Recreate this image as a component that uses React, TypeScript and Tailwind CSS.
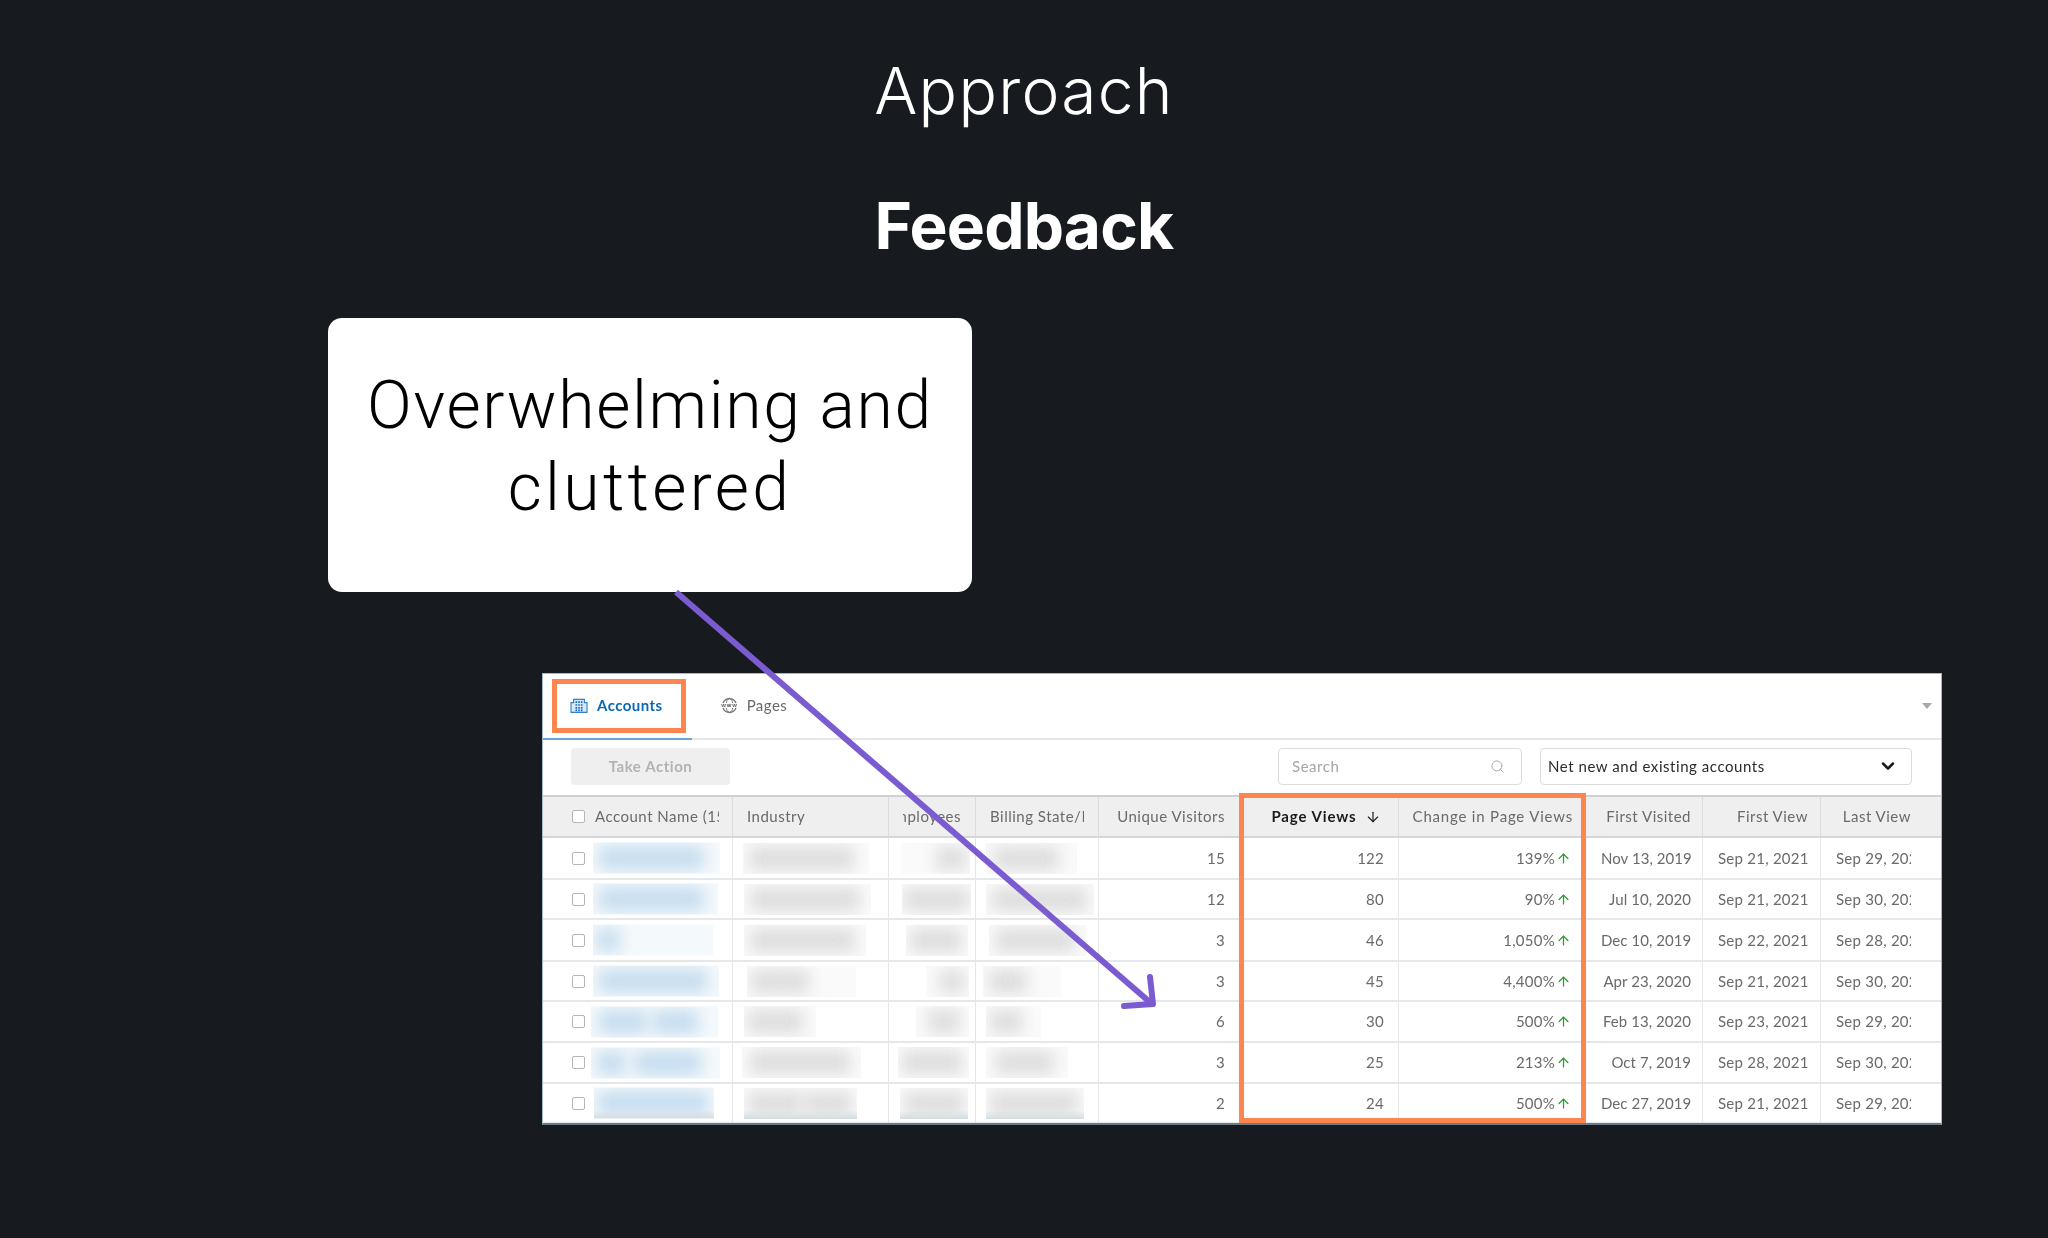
import React from 'react';
import { ArrowDown, ArrowUp, ChevronDown, Search } from 'lucide-react';

type BlurCell = { start: number; width: number; blobs: [number, number][] };

type Row = {
  height: string;
  cells: BlurCell[];
  visitors: number;
  views: number;
  change: string;
  firstVisited: string;
  firstView: string;
  lastView: string;
};

const cell = (start: number, width: number, ...blobs: [number, number][]): BlurCell => ({ start, width, blobs });

const rows: Row[] = [
  {
    height: 'h-[42px]',
    cells: [
      cell(50, 127, [6, 105]),
      cell(10, 126, [6, 105]),
      cell(12, 69, [35, 30]),
      cell(10, 91, [8, 65]),
    ],
    visitors: 15, views: 122, change: '139%', firstVisited: 'Nov 13, 2019', firstView: 'Sep 21, 2021', lastView: 'Sep 29, 2021',
  },
  {
    height: 'h-[40px]',
    cells: [
      cell(50, 125, [6, 105]),
      cell(11, 127, [6, 110]),
      cell(13, 69, [2, 65]),
      cell(10, 108, [6, 95]),
    ],
    visitors: 12, views: 80, change: '90%', firstVisited: 'Jul 10, 2020', firstView: 'Sep 21, 2021', lastView: 'Sep 30, 2021',
  },
  {
    height: 'h-[42px]',
    cells: [
      cell(50, 120, [4, 22]),
      cell(11, 122, [6, 105]),
      cell(17, 62, [4, 52]),
      cell(13, 97, [6, 80]),
    ],
    visitors: 3, views: 46, change: '1,050%', firstVisited: 'Dec 10, 2019', firstView: 'Sep 22, 2021', lastView: 'Sep 28, 2021',
  },
  {
    height: 'h-[40px]',
    cells: [
      cell(50, 126, [6, 108]),
      cell(14, 109, [4, 58]),
      cell(37, 43, [14, 24]),
      cell(7, 78, [6, 38]),
    ],
    visitors: 3, views: 45, change: '4,400%', firstVisited: 'Apr 23, 2020', firstView: 'Sep 21, 2021', lastView: 'Sep 30, 2021',
  },
  {
    height: 'h-[41px]',
    cells: [
      cell(48, 127, [8, 48], [62, 45]),
      cell(11, 72, [4, 55]),
      cell(27, 53, [12, 32]),
      cell(10, 55, [4, 32]),
    ],
    visitors: 6, views: 30, change: '500%', firstVisited: 'Feb 13, 2020', firstView: 'Sep 23, 2021', lastView: 'Sep 29, 2021',
  },
  {
    height: 'h-[41px]',
    cells: [
      cell(48, 129, [6, 28], [44, 66]),
      cell(9, 119, [8, 100]),
      cell(9, 71, [4, 60]),
      cell(10, 82, [10, 58]),
    ],
    visitors: 3, views: 25, change: '213%', firstVisited: 'Oct 7, 2019', firstView: 'Sep 28, 2021', lastView: 'Sep 30, 2021',
  },
  {
    height: 'h-[40px]',
    cells: [
      cell(51, 120, [4, 110]),
      cell(11, 113, [4, 55], [60, 48]),
      cell(11, 68, [4, 60]),
      cell(10, 98, [4, 88]),
    ],
    visitors: 2, views: 24, change: '500%', firstVisited: 'Dec 27, 2019', firstView: 'Sep 21, 2021', lastView: 'Sep 29, 2021',
  },
];

const gridCols = 'grid grid-cols-[190px_156px_87px_123px_143px_157px_185px_119px_118px_118px]';

const AccountsIcon = () => (
  <svg width="18" height="15" viewBox="0 0 18 15" fill="none" stroke="#2f80c6" strokeWidth="1.1">
    <path d="M1 14.4V4.6h2.6V1.4h10.8v3.2H17v9.8z" fill="#d9e8f5" />
    <path d="M5.5 4.2h1.6M8.2 4.2h1.6M10.9 4.2h1.6M5.5 7h1.6M8.2 7h1.6M10.9 7h1.6M5.5 9.8h1.6M8.2 9.8h1.6M10.9 9.8h1.6M5.5 12.4h1.6M8.2 12.4h1.6M10.9 12.4h1.6" stroke="#0c67b5" strokeWidth="1.7" />
  </svg>
);

const PagesIcon = () => (
  <svg width="17" height="17" viewBox="0 0 17 17" fill="none" stroke="#707070" strokeWidth="1.3">
    <path d="M2 6a7 7 0 0 1 13 0M2 11a7 7 0 0 0 13 0" />
    <path d="M8.5 1.2c-2 1.2-3 2.8-3.2 4.8M8.5 1.2c2 1.2 3 2.8 3.2 4.8M8.5 15.8c-2-1.2-3-2.8-3.2-4.8M8.5 15.8c2-1.2 3-2.8 3.2-4.8" strokeWidth="1" />
    <path d="M.6 7l1 3 1-3 1 3 1-3M6.1 7l1 3 1-3 1 3 1-3M11.6 7l1 3 1-3 1 3 1-3" strokeWidth="0.9" />
  </svg>
);

const Check = () => <span className="block size-[13px] shrink-0 rounded-[2px] border border-[#b5b5b5] bg-white" />;

const HeadCell = ({ children, className = '' }: { children: React.ReactNode; className?: string }) => (
  <div className={`flex h-full items-center overflow-hidden whitespace-nowrap border-r border-[#dcdcdc] ${className}`}>
    {children}
  </div>
);

const Blurred = ({ data, blue, tail }: { data: BlurCell; blue?: boolean; tail?: boolean }) => (
  <div
    className={`relative h-[31px] overflow-hidden ${blue ? 'bg-[#f4f9fc]' : 'bg-[#fafafa]'}`}
    style={{ marginLeft: data.start, width: data.width }}
  >
    {data.blobs.map(([left, width]) => (
      <div
        key={left}
        className={`absolute inset-y-[4px] blur-[8px] ${blue ? 'bg-[#c4dcee]' : 'bg-[#dddddd]'}`}
        style={{ left, width }}
      />
    ))}
    {tail && <div className="absolute inset-x-0 bottom-0 h-[9px] bg-linear-to-b from-transparent to-[#d3dce1]" />}
  </div>
);

const BodyCell = ({ children, className = '' }: { children?: React.ReactNode; className?: string }) => (
  <div className={`flex h-full items-center overflow-hidden whitespace-nowrap border-r border-[#e6e6e6] ${className}`}>
    {children}
  </div>
);

const AccountsTable = () => (
  <div className="relative h-[452px] w-[1400px] overflow-hidden border border-[#a3bac8] border-b-2 border-b-[#6d7c85] bg-white font-['Lato','Open_Sans',sans-serif] text-[15px] text-[#6a6a6a] blur-[0.35px]">
    {/* tabs */}
    <div className="relative flex h-[66px] items-center border-b-2 border-[#e4e6e8] pb-[1px] tracking-[0.45px]">
      <div className="absolute -bottom-[2px] left-0 h-[2px] w-[149px] bg-[#6aa5d8]" />
      <div className="ml-[27px] flex items-center gap-[9px] font-bold text-[#0c67b5]">
        <AccountsIcon />
        Accounts
      </div>
      <div className="ml-[58px] flex items-center gap-[9px]">
        <PagesIcon />
        Pages
      </div>
      <div className="ml-auto mr-[9px] size-0 border-x-[5px] border-t-[6px] border-x-transparent border-t-[#a9a9a9]" />
    </div>

    {/* toolbar */}
    <div className="flex h-[57px] items-center border-b-2 border-[#cfd2d4] pb-[3px] tracking-[0.55px]">
      <div className="ml-[28px] flex h-[37px] w-[159px] items-center justify-center rounded-[4px] bg-[#efefef] font-bold text-[#b3b3b3]">
        Take Action
      </div>
      <div className="ml-[548px] flex h-[37px] w-[244px] items-center justify-between rounded-[4px] border border-[#dcdcdc] pl-[13px] pr-[16px] text-[#a5a5a5]">
        Search
        <Search size={15} strokeWidth={1.5} />
      </div>
      <div className="ml-[18px] flex h-[37px] w-[372px] items-center justify-between rounded-[4px] border border-[#dcdcdc] pl-[7px] pr-[13px] text-[#2b2b2b]">
        Net new and existing accounts
        <ChevronDown size={20} strokeWidth={3} className="text-[#1a1a1a]" />
      </div>
    </div>

    {/* table head */}
    <div className={`${gridCols} h-[41px] border-b-2 border-[#d4d7d9] bg-[#efefef] tracking-[0.5px]`}>
      <HeadCell className="gap-[10px] pl-[29px]">
        <Check />
        <span className="w-[124px] overflow-hidden">Account Name (15)</span>
      </HeadCell>
      <HeadCell className="pl-[14px]">Industry</HeadCell>
      <HeadCell className="pl-[14px]">
        <span className="flex w-[58px] justify-end overflow-hidden">Employees</span>
      </HeadCell>
      <HeadCell className="pl-[14px]">
        <span className="w-[94px] overflow-hidden">Billing State/Province</span>
      </HeadCell>
      <HeadCell className="justify-end pr-[16px]">Unique Visitors</HeadCell>
      <HeadCell className="justify-center gap-[8px] pl-[12px] font-bold tracking-[0.9px] text-[#1a1a1a]">
        Page Views
        <ArrowDown size={16} strokeWidth={1.75} />
      </HeadCell>
      <HeadCell className="justify-end pr-[10px] tracking-[0.8px]">Change in Page Views</HeadCell>
      <HeadCell className="justify-end pr-[11px]">First Visited</HeadCell>
      <HeadCell className="justify-end pr-[12px]">First View</HeadCell>
      <HeadCell className="border-r-0 justify-end pr-[28px]">Last View</HeadCell>
    </div>

    {/* table body */}
    {rows.map((row, i) => (
      <div key={i} className={`${gridCols} ${row.height} border-b-2 border-[#e5e8ea] tracking-[0.25px] last:border-b-0`}>
        <BodyCell className="relative pl-[29px]">
          <Check />
          <div className="absolute left-0 top-1/2 -translate-y-1/2">
            <Blurred data={row.cells[0]} blue tail={i === 6} />
          </div>
        </BodyCell>
        <BodyCell><Blurred data={row.cells[1]} tail={i === 6} /></BodyCell>
        <BodyCell><Blurred data={row.cells[2]} tail={i === 6} /></BodyCell>
        <BodyCell><Blurred data={row.cells[3]} tail={i === 6} /></BodyCell>
        <BodyCell className="justify-end pr-[16px]">{row.visitors}</BodyCell>
        <BodyCell className="justify-end pr-[14px]">{row.views}</BodyCell>
        <BodyCell className="justify-end gap-[1px] pr-[12px]">
          {row.change}
          <ArrowUp size={15} strokeWidth={2} className="text-[#2b9a2f]" />
        </BodyCell>
        <BodyCell className="justify-end pr-[11px]">
          <span className="block w-[90px] overflow-hidden text-right tracking-[0.05px]">{row.firstVisited}</span>
        </BodyCell>
        <BodyCell className="pl-[15px]">
          <span className="block w-[90px] overflow-hidden">{row.firstView}</span>
        </BodyCell>
        <BodyCell className="border-r-0 pl-[15px]">
          <span className="block w-[75px] overflow-hidden">{row.lastView}</span>
        </BodyCell>
      </div>
    ))}

    {/* annotation boxes */}
    <div className="absolute left-[9px] top-[5px] h-[54px] w-[134px] border-[5px] border-[#ff8550]" />
    <div className="absolute left-[696px] top-[119px] h-[330px] w-[347px] border-[5px] border-[#ff8550]" />
  </div>
);

export default function App() {
  return (
    <div className="relative h-[1238px] w-[2048px] overflow-hidden bg-[#171a1f]">
      <div className="flex flex-col items-center pt-[47px] font-['Inter',sans-serif] text-white">
        <h1 className="text-[64px] font-light leading-[88px] tracking-[1.3px]">Approach</h1>
        <h2 className="mt-[47px] text-[64px] font-bold leading-[88px] tracking-[-0.8px]">Feedback</h2>
      </div>

      <div className="ml-[328px] mt-[48px] flex h-[274px] w-[644px] flex-col items-center rounded-[14px] bg-white pt-[47px] text-center font-['Roboto',sans-serif] text-[66px] font-light leading-[82px] tracking-[1.7px] text-black">
        <span>Overwhelming and</span>
        <span className="tracking-[3.4px]">cluttered</span>
      </div>

      <div className="ml-[542px] mt-[81px]">
        <AccountsTable />
      </div>

      {/* arrow lies over the table */}
      <svg className="absolute left-0 top-0" width="2048" height="1238" fill="none" stroke="#7a5bd0" strokeWidth="6" strokeLinecap="round" strokeLinejoin="round">
        <path d="M676 592 1152 1004" strokeLinecap="butt" />
        <path d="M1150 977 1153 1004 1124 1006" />
      </svg>
    </div>
  );
}
